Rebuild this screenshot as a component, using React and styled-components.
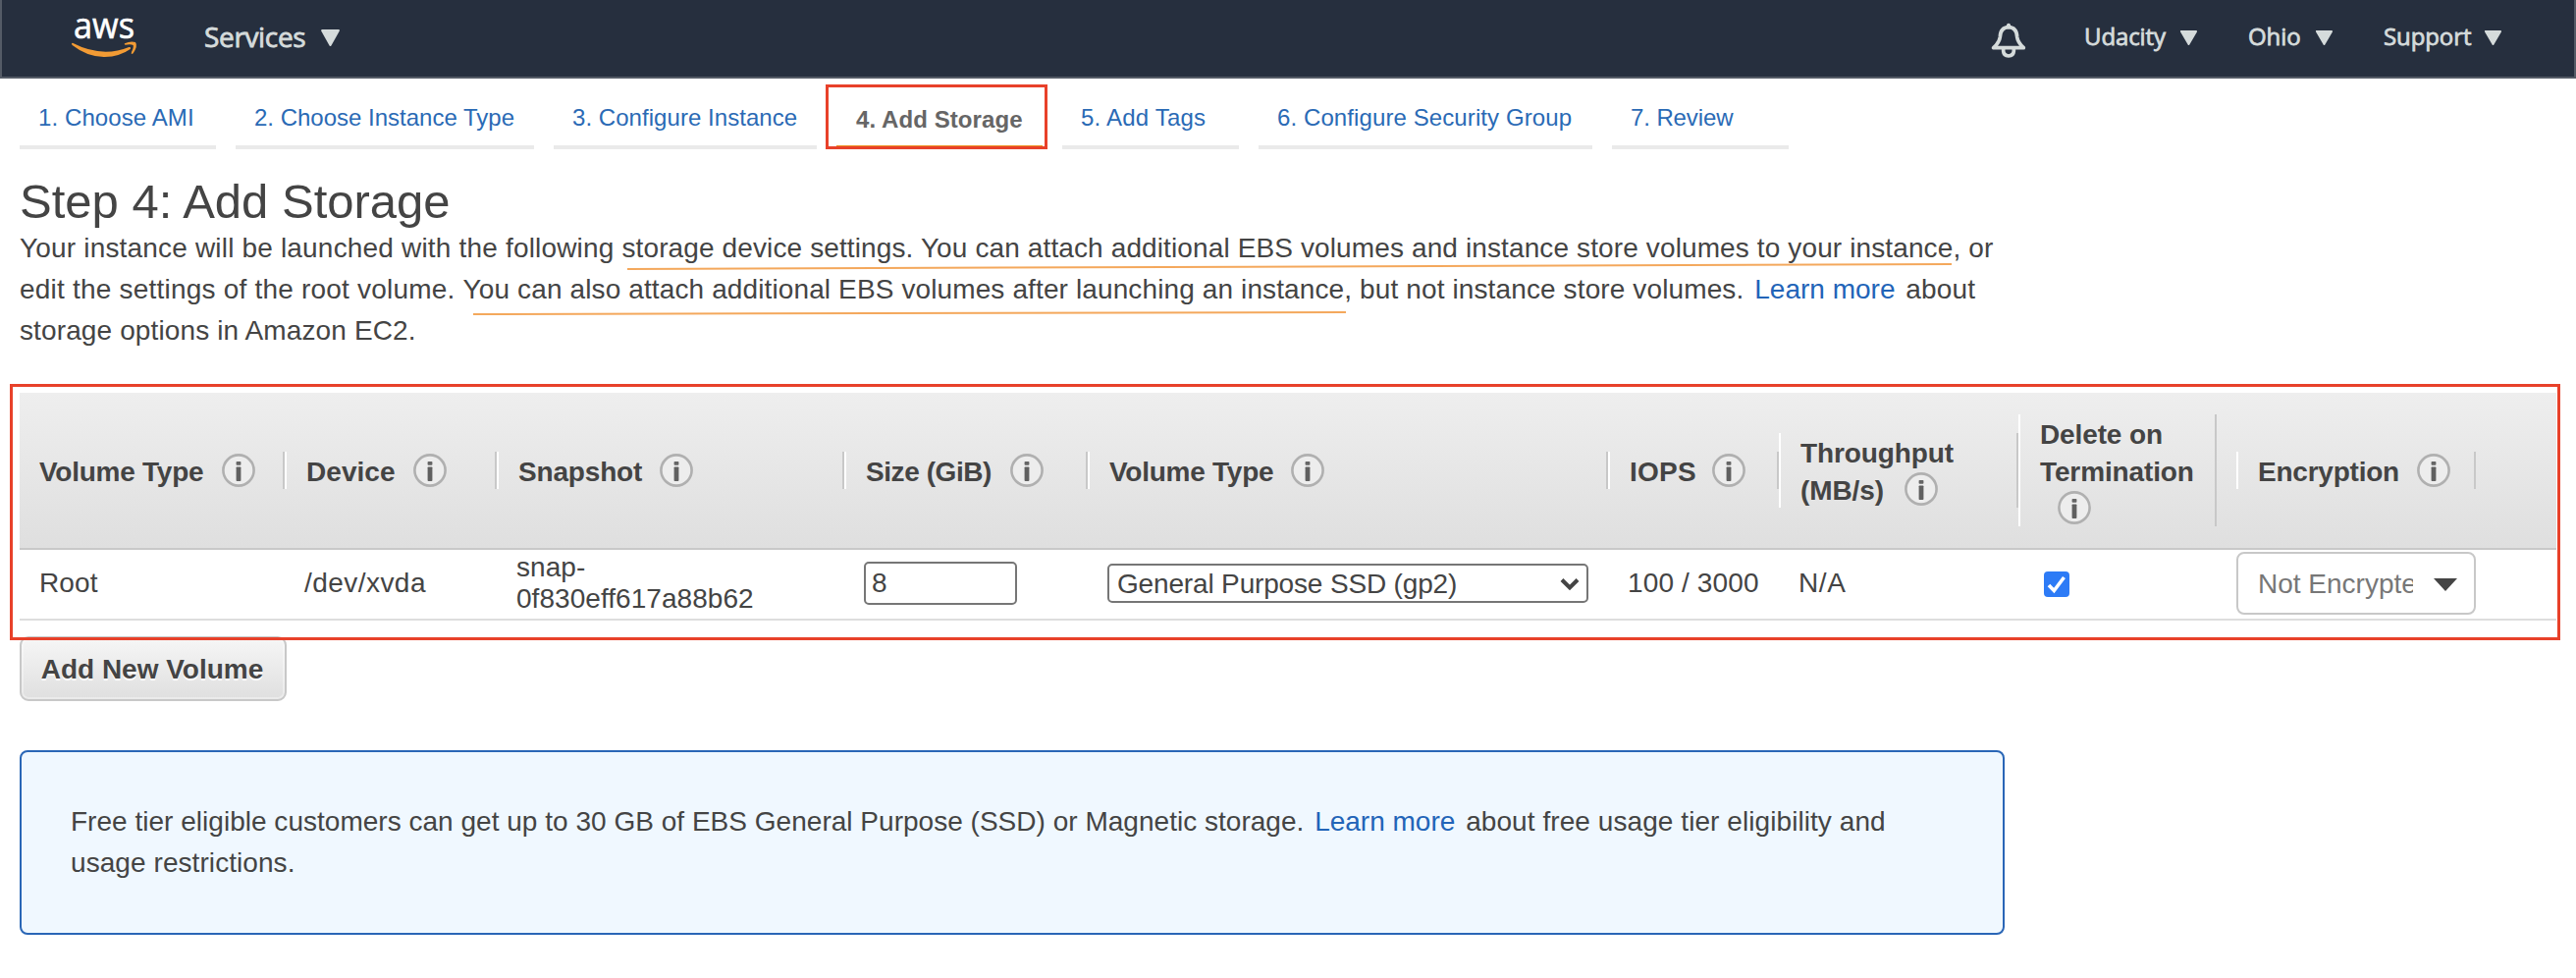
import React from "react";
import styled, { createGlobalStyle } from "styled-components";

const SANS = '"Liberation Sans", Arial, sans-serif';
const NAV = '"Open Sans", "Noto Sans", sans-serif';
const RED = "#e8412a";

const GlobalStyle = createGlobalStyle`
  *, *::before, *::after { box-sizing: border-box; }
  body {
    margin: 0;
    background: #fff;
    color: #444;
    font: 28px/42px ${SANS};
  }
`;

const Page = styled.div`
  width: 2624px;
  min-height: 996px;
  overflow: hidden;
`;

/* Navigation */
const NavBar = styled.header`
  display: flex;
  align-items: center;
  height: 80px;
  padding: 0 73px 4px 71px;
  background: #262f3e;
  border: 2px solid #545b66;
  border-top: 0;
  font-family: ${NAV};
  color: #d5dbdb;
`;

const Logo = styled.svg`
  display: block;
  width: 68px;
  height: 48px;
  overflow: visible;
`;

const NavItem = styled.div`
  display: flex;
  align-items: center;
  justify-content: space-between;
  width: ${(p) => p.$width}px;
  margin-left: ${(p) => p.$gap}px;
  font-size: ${(p) => p.$size || 24}px;
  line-height: 40px;
  letter-spacing: ${(p) => p.$track || 0}px;
  white-space: nowrap;
  -webkit-text-stroke: 0.8px #d5dbdb;
`;

const NavCaret = styled.svg`
  display: block;
  flex: none;
  width: ${(p) => p.$width}px;
  height: ${(p) => p.$height}px;
  margin-top: 2px;
`;

const Bell = styled.svg`
  display: block;
  width: 36px;
  height: 36px;
  margin: 8px 0 0 auto;
`;

/* Wizard steps */
const Main = styled.main`
  padding: 0 20px;
`;

const Steps = styled.nav`
  display: flex;
  gap: 20px;
`;

const Step = styled.div`
  position: relative;
  width: ${(p) => p.$width}px;
  height: 72px;
  padding: ${(p) => (p.$active ? 28 : 26)}px 0 0 ${(p) => (p.$active ? 20 : 19)}px;
  border-bottom: 4px solid ${(p) => (p.$active ? "#ec9222" : "#eaeaea")};
  color: ${(p) => (p.$active ? "#666" : "#2a6ab5")};
  font-size: 24px;
  font-weight: ${(p) => (p.$active ? 700 : 400)};
  line-height: 28px;
  letter-spacing: ${(p) => p.$track}px;
  white-space: nowrap;
`;

const StepMark = styled.span`
  position: absolute;
  inset: 6px -5px -4px -11px;
  border: 3px solid ${RED};
`;

/* Introduction */
const Title = styled.h1`
  margin: 26px 0 0;
  font-size: 49px;
  font-weight: 400;
  line-height: 54px;
`;

const Intro = styled.p`
  position: relative;
  margin: 0;
  letter-spacing: 0.12px;
  white-space: nowrap;
`;

const Strokes = styled.svg`
  position: absolute;
  left: 0;
  top: 0;
  width: 2020px;
  height: 126px;
  pointer-events: none;
`;

const Link = styled.a`
  margin: 0 3px 0 3px;
  color: #2264b8;
  letter-spacing: 0;
`;

const Tracked = styled.span`
  letter-spacing: ${(p) => p.$track}px;
`;

/* Volume table */
const TableFrame = styled.section`
  position: relative;
  width: 2584px;
  margin-top: 42px;
`;

const TableMark = styled.span`
  position: absolute;
  inset: -9px -4px -20px -10px;
  border: 3px solid ${RED};
  z-index: 2;
  pointer-events: none;
`;

const TableRow = styled.div`
  display: grid;
  grid-template-columns: 270px 216px 354px 248px 530px 174px 244px 202px 20px 244px 1fr;
  align-items: center;
`;

const HeadRow = styled(TableRow)`
  height: 160px;
  background: linear-gradient(#eee, #dfdfdf);
  border-bottom: 2px solid #c8c8c8;
  font-weight: 700;
  line-height: 38px;
`;

const HeadCell = styled.div`
  padding-left: 20px;
  border-left: ${(p) => (p.$first ? 0 : 2)}px solid #fff;
  border-right: 2px solid #c8c8c8;
  letter-spacing: ${(p) => p.$track || 0}px;
  white-space: nowrap;
`;

const HeadText = styled.div`
  margin: 2px 0 -2px;
`;

const Info = styled.svg`
  width: 34px;
  height: 34px;
  margin-left: ${(p) => p.$gap || 18}px;
  vertical-align: -6px;
`;

const BodyRow = styled(TableRow)`
  height: 72px;
  padding-bottom: 2px;
  border-bottom: 2px solid #ddd;
  line-height: 32px;
`;

const Cell = styled.div`
  padding-left: 20px;
  letter-spacing: ${(p) => p.$track || 0}px;
  white-space: nowrap;
`;

const SizeField = styled.div`
  width: 156px;
  height: 44px;
  padding: 4px 6px;
  border: 2px solid #767676;
  border-radius: 5px;
`;

const SelectField = styled.div`
  display: flex;
  align-items: center;
  justify-content: space-between;
  width: 490px;
  height: 40px;
  padding: 1px 6px 0 8px;
  border: 2px solid #767676;
  border-radius: 5px;
  letter-spacing: -0.16px;
`;

const Chevron = styled.svg`
  display: block;
  width: 22px;
  height: 14px;
`;

const Checkbox = styled.svg`
  display: block;
  width: 26px;
  height: 26px;
  margin: 2px 0 0 6px;
`;

const Combo = styled.div`
  display: flex;
  align-items: center;
  justify-content: space-between;
  height: 64px;
  padding: 1px 17px 0 20px;
  border: 2px solid #c8c8c8;
  border-radius: 8px;
  color: #777;
`;

const ComboText = styled.span`
  width: 158px;
  overflow: hidden;
  white-space: nowrap;
`;

const ComboCaret = styled.svg`
  display: block;
  width: 24px;
  height: 14px;
`;

const AddButton = styled.button`
  display: block;
  width: 272px;
  height: 66px;
  margin: 16px 0 0;
  padding: 2px 2px 0 0;
  border: 2px solid #c8c8c8;
  border-radius: 9px;
  background: linear-gradient(#f6f6f6, #dfdfdf);
  box-shadow: inset 0 0 0 2px rgba(255, 255, 255, 0.35);
  color: #444;
  font: 700 28px/32px ${SANS};
  text-shadow: 0 2px 0 #fff;
  white-space: nowrap;
`;

/* Free tier notice */
const Notice = styled.aside`
  width: 2022px;
  height: 188px;
  margin-top: 50px;
  padding: 50px 49px 0 50px;
  border: 2px solid #2a66b6;
  border-radius: 8px;
  background: #f0f8ff;
  letter-spacing: 0.07px;
  white-space: nowrap;
`;

const Caret = ({ width, height }) => (
  <NavCaret $width={width} $height={height} viewBox="0 0 20 16" preserveAspectRatio="none">
    <path d="M2 1H18L10 15Z" fill="#d5dbdb" stroke="#d5dbdb" strokeWidth="2" strokeLinejoin="round" />
  </NavCaret>
);

const InfoIcon = ({ gap }) => (
  <Info $gap={gap} viewBox="0 0 34 34">
    <circle cx="17" cy="17" r="15.6" fill="#ededed" stroke="#b0b0b0" strokeWidth="2.6" />
    <rect x="14.6" y="8" width="4.8" height="3.8" rx="0.8" fill="#666" />
    <rect x="14.6" y="13.4" width="4.8" height="14.6" rx="0.8" fill="#606060" />
  </Info>
);

const steps = [
  { label: "1. Choose AMI", width: 200, track: 0.1 },
  { label: "2. Choose Instance Type", width: 304, track: 0 },
  { label: "3. Configure Instance", width: 268, track: 0.05 },
  { label: "4. Add Storage", width: 210, track: 0.08, active: true },
  { label: "5. Add Tags", width: 180, track: 0.2 },
  { label: "6. Configure Security Group", width: 340, track: 0.1 },
  { label: "7. Review", width: 180, track: -0.1 },
];

const headings = [
  { lines: ["Volume Type"], track: -0.25, gap: 19 },
  { lines: ["Device"], track: 0.05 },
  { lines: ["Snapshot"], track: -0.17 },
  { lines: ["Size (GiB)"], track: -0.43, gap: 19 },
  { lines: ["Volume Type"], track: -0.25 },
  { lines: ["IOPS"], track: 0.25, gap: 16 },
  { lines: ["Throughput", "(MB/s)"], track: -0.1, gap: 21 },
  { lines: ["Delete on", "Termination", ""], track: -0.12 },
  null,
  { lines: ["Encryption"], track: -0.23, gap: 18 },
];

export default function App() {
  return (
    <Page>
      <GlobalStyle />
      <NavBar>
        <Logo viewBox="0 0 68 48">
          <text
            x="2"
            y="25.5"
            fill="#fff"
            stroke="#fff"
            strokeWidth="0.6"
            fontFamily="Open Sans"
            fontSize="37"
            textLength="62"
            lengthAdjust="spacingAndGlyphs"
          >
            aws
          </text>
          <g transform="translate(-13 -13) scale(0.33333)" fill="#f29b34">
            <path d="M42 131Q36 132 42 139Q88 175 140 174Q186 173 218 150Q222 143 214 144Q180 158 143 158Q92 157 42 131Z" />
            <path d="M201 133Q218 125 234 129Q242 140 227 163Q219 168 222 159Q229 145 227 138Q220 134 203 137Q198 136 201 133Z" />
          </g>
        </Logo>
        <NavItem $width={139} $gap={67} $size={28} $track={-0.35}>
          Services <Caret width={21} height={17} />
        </NavItem>
        <Bell viewBox="0 0 108 108">
          <g fill="none" stroke="#d5dbdb" strokeWidth="11" strokeLinejoin="round">
            <path d="M8 77H100Q82 60 80 44Q79 15 54 14Q29 15 28 44Q26 60 8 77Z" />
            <path d="M38 80V87Q39 101 54 102Q69 101 70 87V80" />
          </g>
          <path d="M48 14V6Q54 -1 60 6V14Z" fill="#d5dbdb" />
        </Bell>
        <NavItem $width={116} $gap={59} $track={-0.1}>
          Udacity <Caret width={19} height={15} />
        </NavItem>
        <NavItem $width={87} $gap={51} $track={-0.1}>
          Ohio <Caret width={19} height={15} />
        </NavItem>
        <NavItem $width={121} $gap={51} $track={-0.1}>
          Support <Caret width={19} height={15} />
        </NavItem>
      </NavBar>

      <Main>
        <Steps>
          {steps.map((s) => (
            <Step key={s.label} $width={s.width} $track={s.track} $active={s.active}>
              {s.label}
              {s.active && <StepMark />}
            </Step>
          ))}
        </Steps>

        <Title>Step 4: Add Storage</Title>
        <Intro>
          <Tracked $track={0.18}>Your instance will be launched with the following </Tracked>
          storage device settings. You can attach additional EBS volumes and instance store volumes to your instance, or
          <br />
          <Tracked $track={0.21}>edit the settings of the root volume. </Tracked>
          You can also attach additional EBS volumes after launching an instance, but not instance store volumes.{" "}
          <Link>Learn more</Link> about
          <br />
          storage options in Amazon EC2.
          <Strokes viewBox="0 0 2020 126">
            <g stroke="#f4a85c" strokeWidth="2">
              <path d="M619 42L1968 37" />
              <path d="M462 88L1351 86" />
            </g>
          </Strokes>
        </Intro>

        <TableFrame>
          <HeadRow>
            {headings.map((h, i) =>
              h ? (
                <HeadCell key={i} $first={i === 0} $track={h.track}>
                  <HeadText>
                    {h.lines.map((line, n) => (
                      <React.Fragment key={n}>
                        {n > 0 && <br />}
                        {line}
                      </React.Fragment>
                    ))}
                    <InfoIcon gap={h.gap} />
                  </HeadText>
                </HeadCell>
              ) : (
                <span key={i} />
              )
            )}
          </HeadRow>
          <BodyRow>
            <Cell $track={0.1}>Root</Cell>
            <Cell $track={0.45}>/dev/xvda</Cell>
            <Cell $track={0.05}>
              snap-
              <br />
              0f830eff617a88b62
            </Cell>
            <Cell>
              <SizeField>8</SizeField>
            </Cell>
            <Cell>
              <SelectField>
                General Purpose SSD (gp2)
                <Chevron viewBox="0 0 22 14">
                  <path d="M3 2.5L11 10.5L19 2.5" fill="none" stroke="#444" strokeWidth="4" />
                </Chevron>
              </SelectField>
            </Cell>
            <Cell $track={0.13}>100 / 3000</Cell>
            <Cell $track={0.6}>N/A</Cell>
            <Cell>
              <Checkbox viewBox="0 0 26 26">
                <rect width="26" height="26" rx="4" fill="#2d7bf6" />
                <path d="M5 14L10.3 19.5L20.5 6" fill="none" stroke="#fff" strokeWidth="3.6" />
              </Checkbox>
            </Cell>
            <span />
            <Combo>
              <ComboText>Not Encrypted</ComboText>
              <ComboCaret viewBox="0 0 24 14">
                <path d="M0 1H24L12 14Z" fill="#444" />
              </ComboCaret>
            </Combo>
          </BodyRow>
          <TableMark />
        </TableFrame>

        <AddButton>Add New Volume</AddButton>

        <Notice>
          <Tracked $track={0.02}>
            Free tier eligible customers can get up to 30 GB of EBS General Purpose (SSD) or Magnetic storage.{" "}
          </Tracked>
          <Link>Learn more</Link> about free usage tier eligibility and
          <br />
          usage restrictions.
        </Notice>
      </Main>
    </Page>
  );
}
